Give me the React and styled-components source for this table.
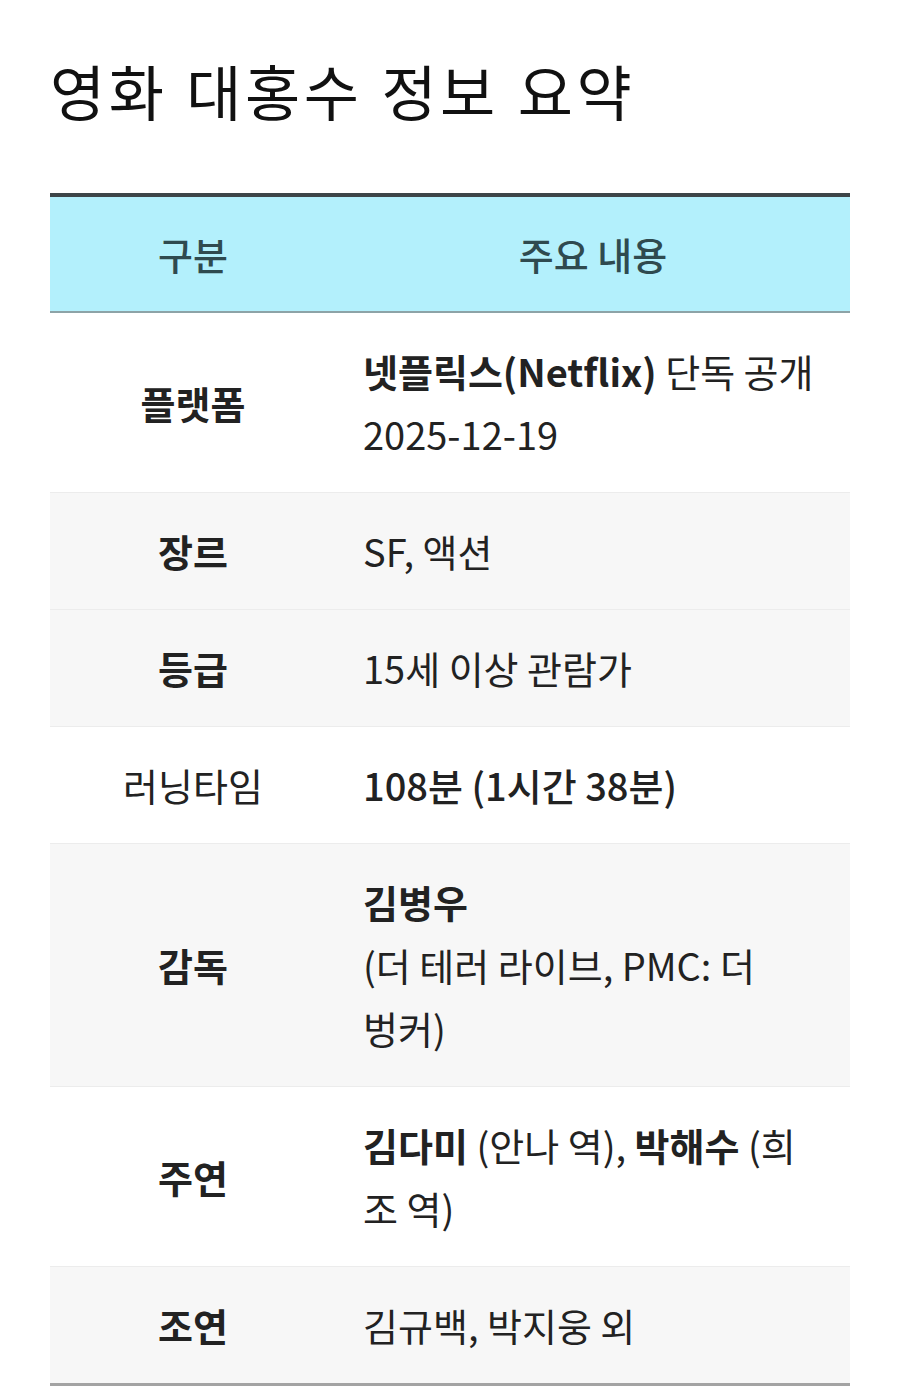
import React from 'react'
import styled, { createGlobalStyle } from 'styled-components'

const GlobalStyle = createGlobalStyle`
  *, *::before, *::after {
    box-sizing: border-box;
  }
  body {
    margin: 0;
    background: #ffffff;
    font-family: "Noto Sans CJK KR", "Noto Sans", sans-serif;
    color: #222222;
  }
`

const Page = styled.div`
  padding: 0 50px 40px;
`

const Title = styled.h1`
  margin: 54px 0 67px;
  font-size: 60px;
  line-height: 72px;
  font-weight: 400;
  color: #111111;
  letter-spacing: 3.5px;
  word-spacing: 2px;
`

const Table = styled.table`
  width: 100%;
  border-collapse: collapse;
  table-layout: fixed;
  border-top: 4px solid #3d4548;
  border-bottom: 3px solid #a3a3a3;
`

const HeadRow = styled.tr`
  background: #b3f0fc;
  border-bottom: 2px solid #8da3a7;
`

const HeadCell = styled.th`
  width: ${p => p.$width || 'auto'};
  padding: 26px 20px;
  font-size: 38px;
  line-height: 62px;
  font-weight: 500;
  color: #2f4a4f;
  text-align: center;
`

const Row = styled.tr`
  background: ${p => (p.$shaded ? '#f7f7f7' : '#ffffff')};
  border-bottom: 1px solid #ececec;
  &:last-child {
    border-bottom: none;
  }
`

const Label = styled.td`
  padding: 26px 20px 27px;
  font-size: 38px;
  line-height: 63px;
  font-weight: ${p => (p.$light ? 400 : 700)};
  text-align: center;
  vertical-align: middle;
  color: #222222;
`

const Value = styled.td`
  padding: 26px 16px 27px 27px;
  font-size: 38px;
  line-height: 63px;
  font-weight: ${p => (p.$medium ? 500 : 400)};
  color: #222222;
  vertical-align: middle;
`

const Strong = styled.b`
  font-weight: 700;
`

const rows = [
  {
    label: '플랫폼',
    value: (
      <>
        <Strong>넷플릭스(Netflix)</Strong> 단독 공개
        <br />
        2025-12-19
      </>
    ),
  },
  { label: '장르', value: 'SF, 액션', shaded: true },
  { label: '등급', value: '15세 이상 관람가', shaded: true },
  { label: '러닝타임', value: '108분 (1시간 38분)', light: true, medium: true },
  {
    label: '감독',
    shaded: true,
    value: (
      <>
        <Strong>김병우</Strong>
        <br />
        (더 테러 라이브, PMC: 더
        <br />
        벙커)
      </>
    ),
  },
  {
    label: '주연',
    value: (
      <>
        <Strong>김다미</Strong> (안나 역), <Strong>박해수</Strong> (희
        <br />
        조 역)
      </>
    ),
  },
  { label: '조연', value: '김규백, 박지웅 외', shaded: true },
]

const App = () => {
  return (
    <Page>
      <GlobalStyle />
      <Title>영화 대홍수 정보 요약</Title>
      <Table>
        <thead>
          <HeadRow>
            <HeadCell $width="286px">구분</HeadCell>
            <HeadCell>주요 내용</HeadCell>
          </HeadRow>
        </thead>
        <tbody>
          {rows.map(r => (
            <Row key={r.label} $shaded={r.shaded}>
              <Label $light={r.light}>{r.label}</Label>
              <Value $medium={r.medium}>{r.value}</Value>
            </Row>
          ))}
        </tbody>
      </Table>
    </Page>
  )
}

export default App
